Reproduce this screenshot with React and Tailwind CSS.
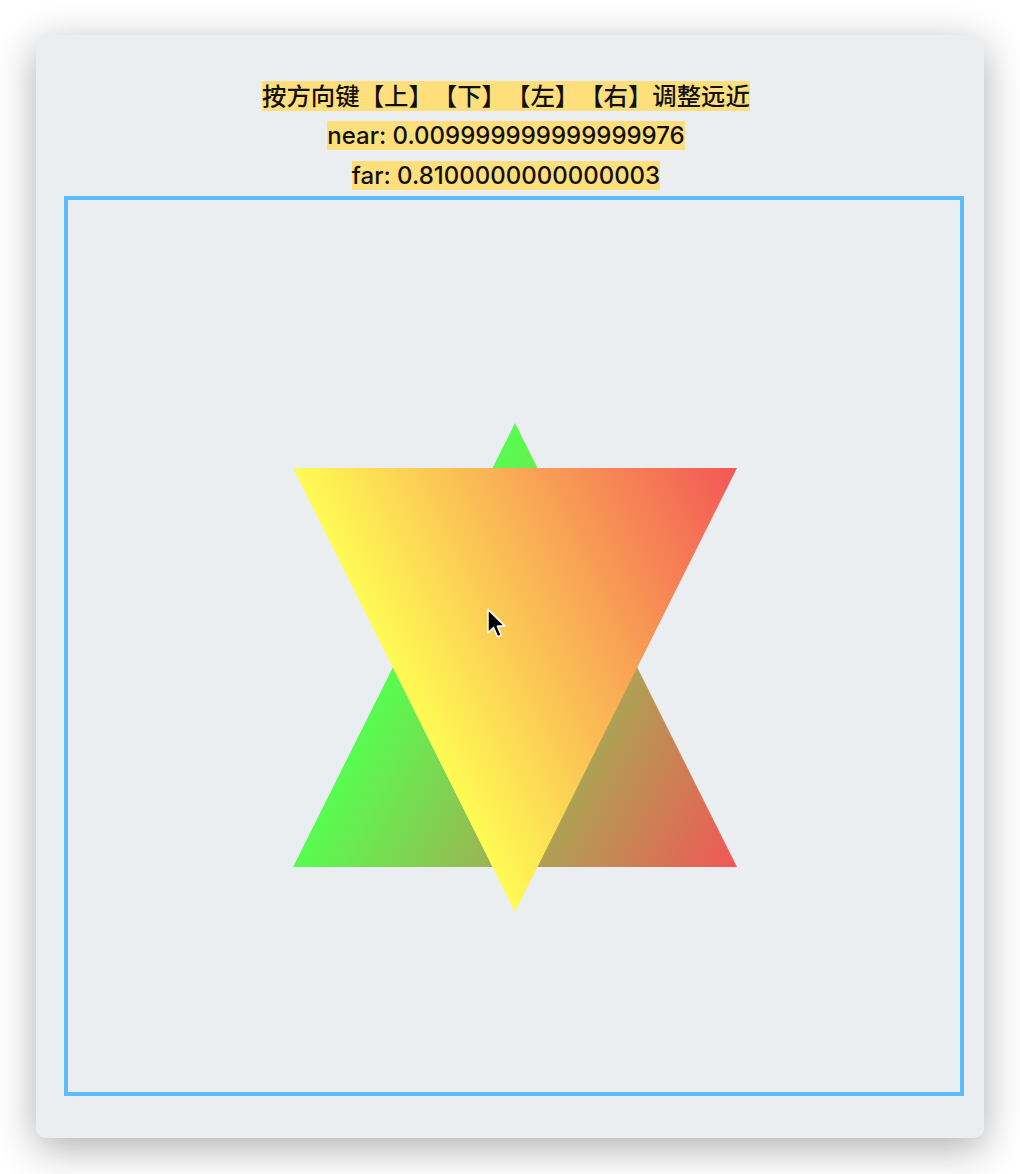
import React from 'react';

const GREEN = '#58fd50';
const RED = '#f35656';
const YELLOW = '#fffb54';

const lines = [
  { text: '按方向键【上】【下】【左】【右】调整远近', size: 'text-[24.4px]' },
  { text: 'near: 0.009999999999999976', size: 'text-[24px]' },
  { text: 'far: 0.8100000000000003', size: 'text-[24px]' },
];

// two triangles with vertex colours, drawn as linear gradients (two vertices share a colour)
const Scene = () => (
  <svg width="892" height="892" viewBox="1 1 892 892" className="block">
    <defs>
      <linearGradient id="gGreen" gradientUnits="userSpaceOnUse" x1="314.8" y1="490.4" x2="670" y2="668">
        <stop offset="0" stopColor={GREEN} />
        <stop offset="1" stopColor={RED} />
      </linearGradient>
      <linearGradient id="gYellow" gradientUnits="userSpaceOnUse" x1="314.8" y1="446.6" x2="670" y2="269">
        <stop offset="0" stopColor={YELLOW} />
        <stop offset="1" stopColor={RED} />
      </linearGradient>
    </defs>
    <polygon points="448,224 226,668 670,668" fill="url(#gGreen)" />
    <polygon points="226,269 670,269 448,713" fill="url(#gYellow)" />
  </svg>
);

const Cursor = () => (
  <svg width="22" height="32" viewBox="0 0 16 24" className="absolute left-[418px] top-[408px]">
    <path
      d="M1.2 1 L1.2 18.6 L5.4 14.6 L8.4 21.6 L11.2 20.4 L8.3 13.6 L14 13.6 Z"
      fill="#000"
      stroke="#fff"
      strokeWidth="1.2"
      strokeLinejoin="round"
    />
  </svg>
);

export default function App() {
  return (
    <div className="min-h-[1174px] w-[1020px] bg-white pt-[35px] pl-[36px]">
      <div className="w-[948px] h-[1103px] rounded-[10px] bg-[#eaeef1] shadow-[0_10px_40px_rgba(0,0,0,0.32)] pt-[41px] flex flex-col">
        <div
          className="flex flex-col items-center pr-[8px] font-medium text-[#111] [text-spacing-trim:space-all]"
          style={{ fontFamily: 'Inter, "Noto Sans CJK SC", sans-serif' }}
        >
          {lines.map((l) => (
            <div key={l.text} className={`leading-[40px] h-[40px] ${l.size}`}>
              <span className="bg-[#ffdf7c]">{l.text}</span>
            </div>
          ))}
        </div>
        <div className="ml-[28px] w-[900px] h-[900px] border-4 border-[#5cbdfd] relative">
          <Scene />
          <Cursor />
        </div>
      </div>
    </div>
  );
}
